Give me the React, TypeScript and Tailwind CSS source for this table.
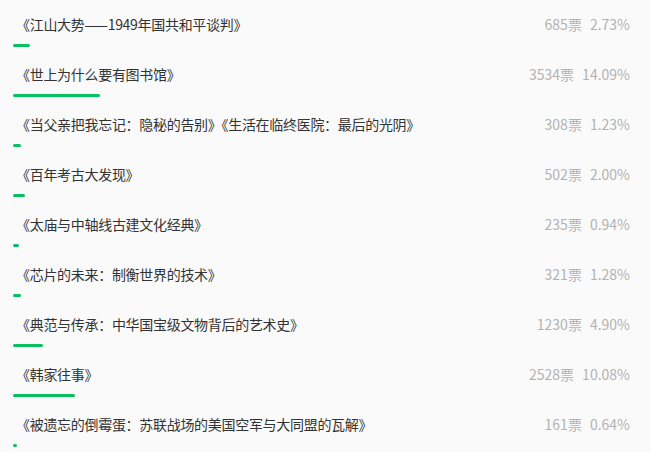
const items = [
  { title: '《江山大势——1949年国共和平谈判》', votes: 685, pct: 2.73 },
  { title: '《世上为什么要有图书馆》', votes: 3534, pct: 14.09 },
  { title: '《当父亲把我忘记：隐秘的告别》《生活在临终医院：最后的光阴》', votes: 308, pct: 1.23 },
  { title: '《百年考古大发现》', votes: 502, pct: 2.0 },
  { title: '《太庙与中轴线古建文化经典》', votes: 235, pct: 0.94 },
  { title: '《芯片的未来：制衡世界的技术》', votes: 321, pct: 1.28 },
  { title: '《典范与传承：中华国宝级文物背后的艺术史》', votes: 1230, pct: 4.9 },
  { title: '《韩家往事》', votes: 2528, pct: 10.08 },
  { title: '《被遗忘的倒霉蛋：苏联战场的美国空军与大同盟的瓦解》', votes: 161, pct: 0.64 },
];

export default function App() {
  return (
    <div
      className="w-[650px] h-[452px] overflow-hidden bg-[#fafafa] pl-[13px] pr-[20px]"
      style={{ fontFamily: '"Noto Sans CJK SC", "Noto Sans", sans-serif' }}
    >
      {items.map((item) => (
        <div key={item.title} className="h-[50px] pt-[14px]">
          <div className="flex items-center justify-between h-5">
            <span className="pl-[3px] text-[14px] text-[#333] leading-5 whitespace-nowrap tracking-[-0.3px]">
              {item.title}
            </span>
            <span className="text-[14px] text-[#b2b2b2] leading-5 whitespace-nowrap">
              {item.votes}票<span className="ml-2">{item.pct.toFixed(2)}%</span>
            </span>
          </div>
          <div className="mt-[10px] h-[3px]">
            <div className="h-[3px] rounded-full bg-[#07c160]" style={{ width: `${item.pct}%` }} />
          </div>
        </div>
      ))}
    </div>
  );
}
